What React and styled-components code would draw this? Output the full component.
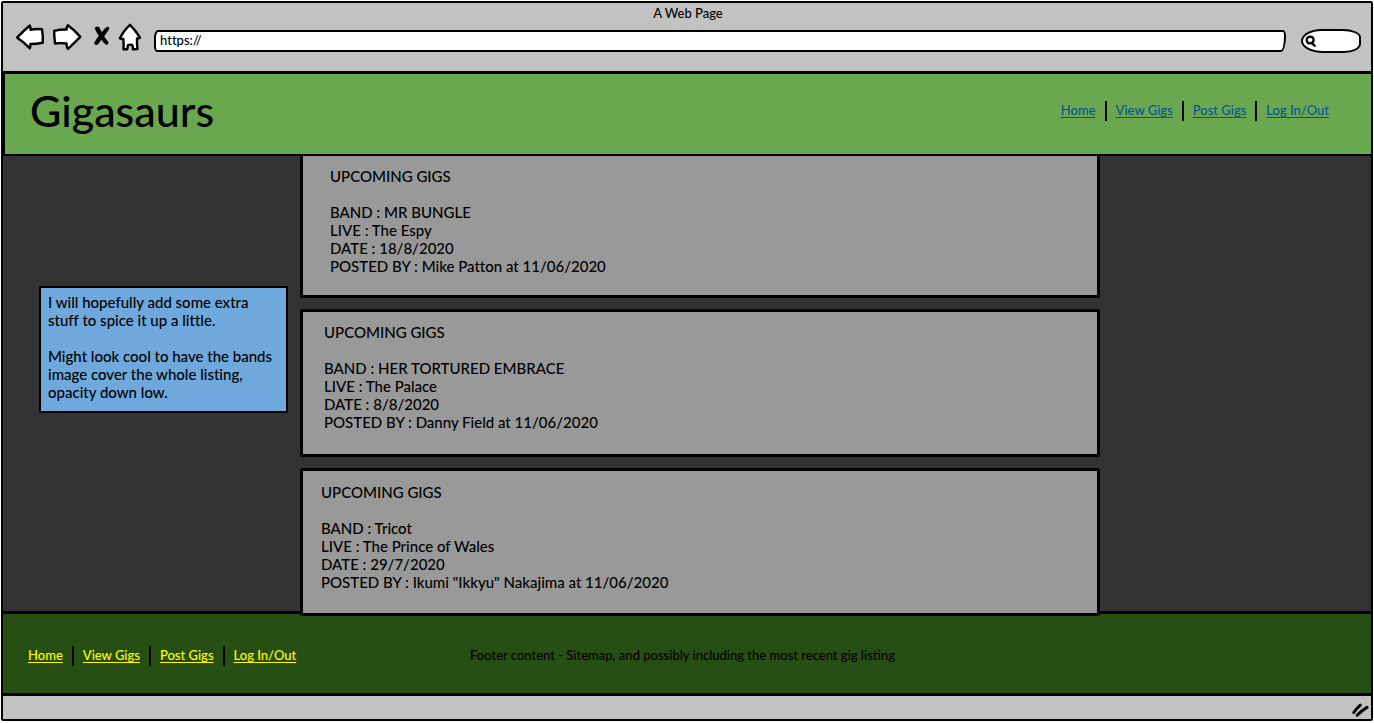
import React from "react";
import styled, { createGlobalStyle } from "styled-components";

const bodyFont = 'Lato, "Liberation Sans", sans-serif';

const GlobalStyle = createGlobalStyle`
  *, *::before, *::after { box-sizing: border-box; }
  body {
    margin: 0;
    background: #fff;
    color: #000;
    font-family: ${bodyFont};
    font-size: 15px;
    line-height: 18px;
    font-variant-ligatures: none;
  }
  #root {
    display: flex;
    min-height: 100vh;
    padding: 1px 1px 2px;
  }
  p, h1, h2, ul { margin: 0; padding: 0; }
`;

const BrowserWindow = styled.div`
  flex: 1;
  min-width: 0;
  display: flex;
  flex-direction: column;
  border: 2px solid #000;
  border-radius: 2px;
  background: #c2c2c2;
`;

const Chrome = styled.div`
  padding: 2px 10px 18px 12px;
  border-bottom: 3px solid #000;
`;

const PageTitle = styled.div`
  text-align: center;
  font: 500 13px/16px ${bodyFont};
`;

const Toolbar = styled.div`
  display: flex;
  align-items: flex-end;
  margin-top: 2px;
`;

const ToolButtons = styled.div`
  display: flex;
  gap: 7px;
  padding-bottom: 2px;
`;

const ToolButton = styled.button`
  display: block;
  padding: 0;
  border: 0;
  background: none;
  line-height: 0;
  cursor: pointer;
`;

const AddressField = styled.label`
  flex: 1;
  min-width: 0;
  display: flex;
  align-items: center;
  height: 24px;
  margin: 0 15px 0 12px;
`;

const AddressInput = styled.input`
  width: 100%;
  height: 22px;
  padding: 0 4px 2px;
  border: 2px solid #000;
  border-radius: 4px 3px 5px 3px / 8px 6px 16px 6px;
  background: #fff;
  color: #000;
  font: 500 13px/16px ${bodyFont};
  font-variant-ligatures: none;
  outline: none;
`;

const SearchField = styled.label`
  display: flex;
  align-items: center;
  width: 60px;
  height: 24px;
  padding-left: 2px;
  border: 2px solid #000;
  border-radius: 22px 20px 18px 24px / 13px 9px 10px 13px;
  background: #fff;
`;

const SearchInput = styled.input`
  flex: 1;
  min-width: 0;
  padding: 0;
  border: 0;
  background: none;
  outline: none;
`;

const SiteHeader = styled.header`
  position: relative;
  z-index: 1;
  display: flex;
  align-items: center;
  justify-content: space-between;
  height: 82px;
  padding: 0 42px 6px 25px;
  border-left: 2px solid #000;
  border-bottom: 2px solid #000;
  background: #6aa84f;
`;

const Brand = styled.h1`
  font-size: 43px;
  line-height: 48px;
  font-weight: 500;
`;

const NavList = styled.ul`
  display: flex;
  align-items: center;
  list-style: none;
`;

const NavItem = styled.li`
  display: flex;
  align-items: center;
  height: 20px;

  & + & {
    margin-left: 9px;
    padding-left: 9px;
    border-left: 2px solid #000;
  }
`;

const NavLink = styled.a`
  padding-bottom: 2px;
  color: ${({ $color }) => $color};
  font: 500 13px/16px ${bodyFont};
  text-decoration: underline;
  text-decoration-thickness: 1px;
  text-underline-offset: 2px;
  text-decoration-skip-ink: none;
`;

const Main = styled.main`
  flex: 1;
  display: grid;
  grid-template-columns: 297fr 800fr 271fr;
  background: #333;
`;

const Side = styled.aside`
  padding: 130px 12px 0 36px;
`;

const Note = styled.div`
  padding: 5px 4px 10px 7px;
  border: 2px solid #000;
  border-radius: 1px;
  background: #6fa8dc;
  font-weight: 500;
`;

const NoteText = styled.p`
  & + & { margin-top: 18px; }
`;

const GigList = styled.div`
  position: relative;
  display: flex;
  flex-direction: column;
  gap: 11px;
  margin-bottom: -5px;
`;

const GigCard = styled.article`
  padding: 11px 20px 23px ${({ $inset }) => $inset}px;
  border: 3px solid #000;
  border-radius: 2px;
  background: #999;
  font-weight: 500;

  &:first-child {
    padding-bottom: 20px;
    border-top: 0;
  }

  &:last-child {
    padding-top: 12px;
    padding-bottom: 22px;
  }
`;

const GigHeading = styled.h2`
  margin-bottom: 18px;
  font-size: 15px;
  line-height: 18px;
  font-weight: 500;
`;

const SiteFooter = styled.footer`
  display: grid;
  grid-template-columns: 1fr auto 1fr;
  align-items: center;
  height: 85px;
  padding: 4px 34px 0 25px;
  border-top: 3px solid #000;
  border-bottom: 3px solid #000;
  background: #274e13;
`;

const FooterText = styled.p`
  padding-bottom: 2px;
  font: 500 13px/16px ${bodyFont};
`;

const StatusBar = styled.div`
  display: flex;
  align-items: center;
  justify-content: flex-end;
  height: 23px;
  padding: 4px 2px 0;
`;

const outline = {
  fill: "#fff",
  stroke: "#000",
  strokeWidth: 2.4,
  strokeLinejoin: "round",
  strokeLinecap: "round",
};

const BackIcon = () => (
  <svg width="30" height="28" viewBox="0 0 30 28" {...outline}>
    <path d="M2 14.6 Q9 7.500 14.800 2.500 Q15.800 4.500 15.500 6.700 Q21 5.600 27 6.200 Q28.200 13 27.800 19.800 Q21.500 21 15.300 21 Q15.800 23.500 14.800 25.300 Q9 19.500 2 14.600Z" />
  </svg>
);

const ForwardIcon = () => (
  <svg width="33" height="28" viewBox="0 0 33 28" {...outline}>
    <path d="M2.200 7.800 Q8 6.300 14.700 6.500 Q14.300 4 15.800 2.300 Q22.500 7 28.300 13.800 Q22.500 19.500 16 26 Q14.300 23.500 14.500 20.500 Q8.500 19.800 3 20.500 Q2.200 14 2.200 7.800Z" />
  </svg>
);

const StopIcon = () => (
  <svg width="19" height="28" viewBox="0 0 19 28" fill="#000">
    <path d="M2.600 5 Q4.500 2.600 7 4 Q8.600 6.200 9.800 9.300 Q12.300 5.500 15 3.800 Q17.500 3.500 17.200 6 Q14.500 10.300 12.200 13.200 Q14 16.500 16.400 19 Q16.700 22 13.900 21.800 Q11.200 19.500 9.300 16.800 Q7.500 20 5.300 21.800 Q2.400 22.600 2.200 20 Q4.200 15.800 6.800 12.700 Q4 9 2.600 5Z" />
  </svg>
);

const HomeIcon = () => (
  <svg width="24" height="28" viewBox="0 0 24 28" {...outline}>
    <path d="M12 1.800 Q17 6.500 22 14.700 Q20.500 15.600 19 15.500 Q18.800 21 19.500 26 L15 26.300 Q15 24 14.200 22 Q12 21.200 9.900 22.300 Q9.700 24.500 9.200 26.300 L5.500 26.300 Q5.900 21 5.300 16 Q3.300 16.200 1.900 15.300 Q6 7 12 1.800Z" />
  </svg>
);

const SearchIcon = () => (
  <svg width="12" height="14" viewBox="0 0 12 14" fill="none" stroke="#000" strokeWidth="2.200" strokeLinecap="round">
    <path d="M8.600 5.500 Q8.400 2.600 5 2.600 Q1.400 3.200 1.600 6.600 Q2.400 9.600 5.600 9.400 Q8.800 8.800 8.600 5.500Z M6.800 9.200 L9.800 11.800" />
  </svg>
);

const ResizeGrip = () => (
  <svg width="17" height="14" viewBox="0 0 17 14" fill="none" stroke="#000" strokeWidth="3" strokeLinecap="round">
    <path d="M1.800 9.500 Q4.300 5.800 8.300 2.200" />
    <path d="M5.200 12.200 Q9.500 7.800 15 4.400" />
  </svg>
);

const toolButtons = [
  { label: "Back", Icon: BackIcon },
  { label: "Forward", Icon: ForwardIcon },
  { label: "Stop", Icon: StopIcon },
  { label: "Home page", Icon: HomeIcon },
];

const pages = ["Home", "View Gigs", "Post Gigs", "Log In/Out"];

const gigs = [
  { band: "MR BUNGLE", live: "The Espy", date: "18/8/2020", posted: "Mike Patton at 11/06/2020", inset: 27 },
  { band: "HER TORTURED EMBRACE", live: "The Palace", date: "8/8/2020", posted: "Danny Field at 11/06/2020", inset: 21 },
  { band: "Tricot", live: "The Prince of Wales", date: "29/7/2020", posted: 'Ikumi "Ikkyu" Nakajima at 11/06/2020', inset: 18 },
];

function SiteNav({ label, color }) {
  return (
    <nav aria-label={label}>
      <NavList>
        {pages.map((page) => (
          <NavItem key={page}>
            <NavLink href="#" $color={color}>{page}</NavLink>
          </NavItem>
        ))}
      </NavList>
    </nav>
  );
}

function Gig({ gig }) {
  return (
    <GigCard $inset={gig.inset}>
      <GigHeading>UPCOMING GIGS</GigHeading>
      <p>BAND : {gig.band}</p>
      <p>LIVE : {gig.live}</p>
      <p>DATE : {gig.date}</p>
      <p>POSTED BY : {gig.posted}</p>
    </GigCard>
  );
}

export default function App() {
  return (
    <>
      <GlobalStyle />
      <BrowserWindow>
        <Chrome>
          <PageTitle>A Web Page</PageTitle>
          <Toolbar>
            <ToolButtons>
              {toolButtons.map(({ label, Icon }) => (
                <ToolButton key={label} type="button" aria-label={label}>
                  <Icon />
                </ToolButton>
              ))}
            </ToolButtons>
            <AddressField>
              <AddressInput type="text" aria-label="Address" defaultValue="https://" />
            </AddressField>
            <SearchField>
              <SearchIcon />
              <SearchInput type="text" aria-label="Search" />
            </SearchField>
          </Toolbar>
        </Chrome>
        <SiteHeader>
          <Brand>Gigasaurs</Brand>
          <SiteNav label="Main" color="#0b5394" />
        </SiteHeader>
        <Main>
          <Side>
            <Note>
              <NoteText>I will hopefully add some extra stuff to spice it up a little.</NoteText>
              <NoteText>Might look cool to have the bands image cover the whole listing, opacity down low.</NoteText>
            </Note>
          </Side>
          <GigList>
            {gigs.map((gig) => (
              <Gig key={gig.band} gig={gig} />
            ))}
          </GigList>
        </Main>
        <SiteFooter>
          <SiteNav label="Footer" color="#ffff00" />
          <FooterText>Footer content - Sitemap, and possibly including the most recent gig listing</FooterText>
        </SiteFooter>
        <StatusBar>
          <ResizeGrip />
        </StatusBar>
      </BrowserWindow>
    </>
  );
}
